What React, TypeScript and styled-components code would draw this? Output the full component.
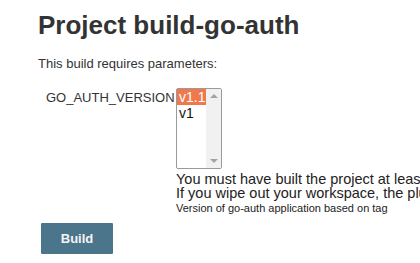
import styled, { createGlobalStyle } from "styled-components";

const GlobalStyle = createGlobalStyle`
  html, body {
    margin: 0;
    padding: 0;
    background: #ffffff;
    overflow: hidden;
  }
  body {
    font-family: "Liberation Sans", Arial, sans-serif;
    color: #333333;
  }
`;

export default function App() {
  const versions = ["v1.1", "v1"];

  return (
    <Page>
      <GlobalStyle />
      <Title>Project build-go-auth</Title>
      <Intro>This build requires parameters:</Intro>
      <ParamRow>
        <ParamName>GO_AUTH_VERSION</ParamName>
        <ParamValue>
          <ListBox>
            <Options>
              {versions.map((v, i) => (
                <Option key={v} $selected={i === 0}>
                  {v}
                </Option>
              ))}
            </Options>
            <ScrollBar>
              <Arrow $up />
              <Arrow />
            </ScrollBar>
          </ListBox>
          <Help>
            <HelpLine>You must have built the project at least once</HelpLine>
            <HelpLine>If you wipe out your workspace, the plugin</HelpLine>
            <Description>Version of go-auth application based on tag</Description>
          </Help>
        </ParamValue>
      </ParamRow>
      <BuildButton>Build</BuildButton>
    </Page>
  );
}

const Page = styled.div`
  padding: 10px 0 0 38px;
  width: 420px;
  height: 263px;
  box-sizing: border-box;
  overflow: hidden;
`;

const Title = styled.h1`
  margin: 0;
  font-size: 26px;
  line-height: 30px;
  font-weight: 700;
  color: #333333;
`;

const Intro = styled.p`
  margin: 16px 0 0;
  font-size: 13px;
  line-height: 15px;
`;

const ParamRow = styled.div`
  display: flex;
  align-items: flex-start;
  margin-top: 17px;
  padding-left: 8px;
`;

const ParamName = styled.div`
  font-size: 13px;
  line-height: 15px;
  margin-top: 2px;
  width: 130px;
  white-space: nowrap;
`;

const ParamValue = styled.div`
  display: flex;
  flex-direction: column;
  min-width: 0;
`;

const ListBox = styled.div`
  display: flex;
  width: 46px;
  height: 81px;
  box-sizing: border-box;
  border: 1px solid #9a9a9a;
  border-radius: 2px;
  background: #ffffff;
`;

const Options = styled.div`
  flex: 1;
  display: flex;
  flex-direction: column;
`;

const Option = styled.div<{ $selected?: boolean }>`
  font-size: 14px;
  line-height: 16px;
  padding-left: 2px;
  color: ${(p) => (p.$selected ? "#ffffff" : "#111111")};
  background: ${(p) => (p.$selected ? "#f0784d" : "transparent")};
`;

const ScrollBar = styled.div`
  width: 15px;
  background: #f1f1f1;
  display: flex;
  flex-direction: column;
  justify-content: space-between;
  align-items: center;
  padding: 5px 0;
  box-sizing: border-box;
`;

const Arrow = styled.div<{ $up?: boolean }>`
  width: 0;
  height: 0;
  border-left: 4px solid transparent;
  border-right: 4px solid transparent;
  ${(p) =>
    p.$up
      ? "border-bottom: 4px solid #a3a3a3;"
      : "border-top: 4px solid #a3a3a3;"}
`;

const Help = styled.div`
  margin-top: 3px;
  width: 244px;
  overflow: hidden;
  white-space: nowrap;
`;

const HelpLine = styled.div`
  font-size: 14.5px;
  line-height: 14px;
  color: #222222;
`;

const Description = styled.div`
  font-size: 11px;
  line-height: 13px;
  margin-top: 2px;
  color: #222222;
`;

const BuildButton = styled.button`
  display: block;
  margin: 8px 0 0 3px;
  width: 72px;
  height: 31px;
  border: none;
  border-radius: 1px;
  background: #4b758b;
  color: #f4f4f4;
  font-family: "Liberation Sans", Arial, sans-serif;
  font-size: 13px;
  font-weight: 700;
  cursor: pointer;
`;
